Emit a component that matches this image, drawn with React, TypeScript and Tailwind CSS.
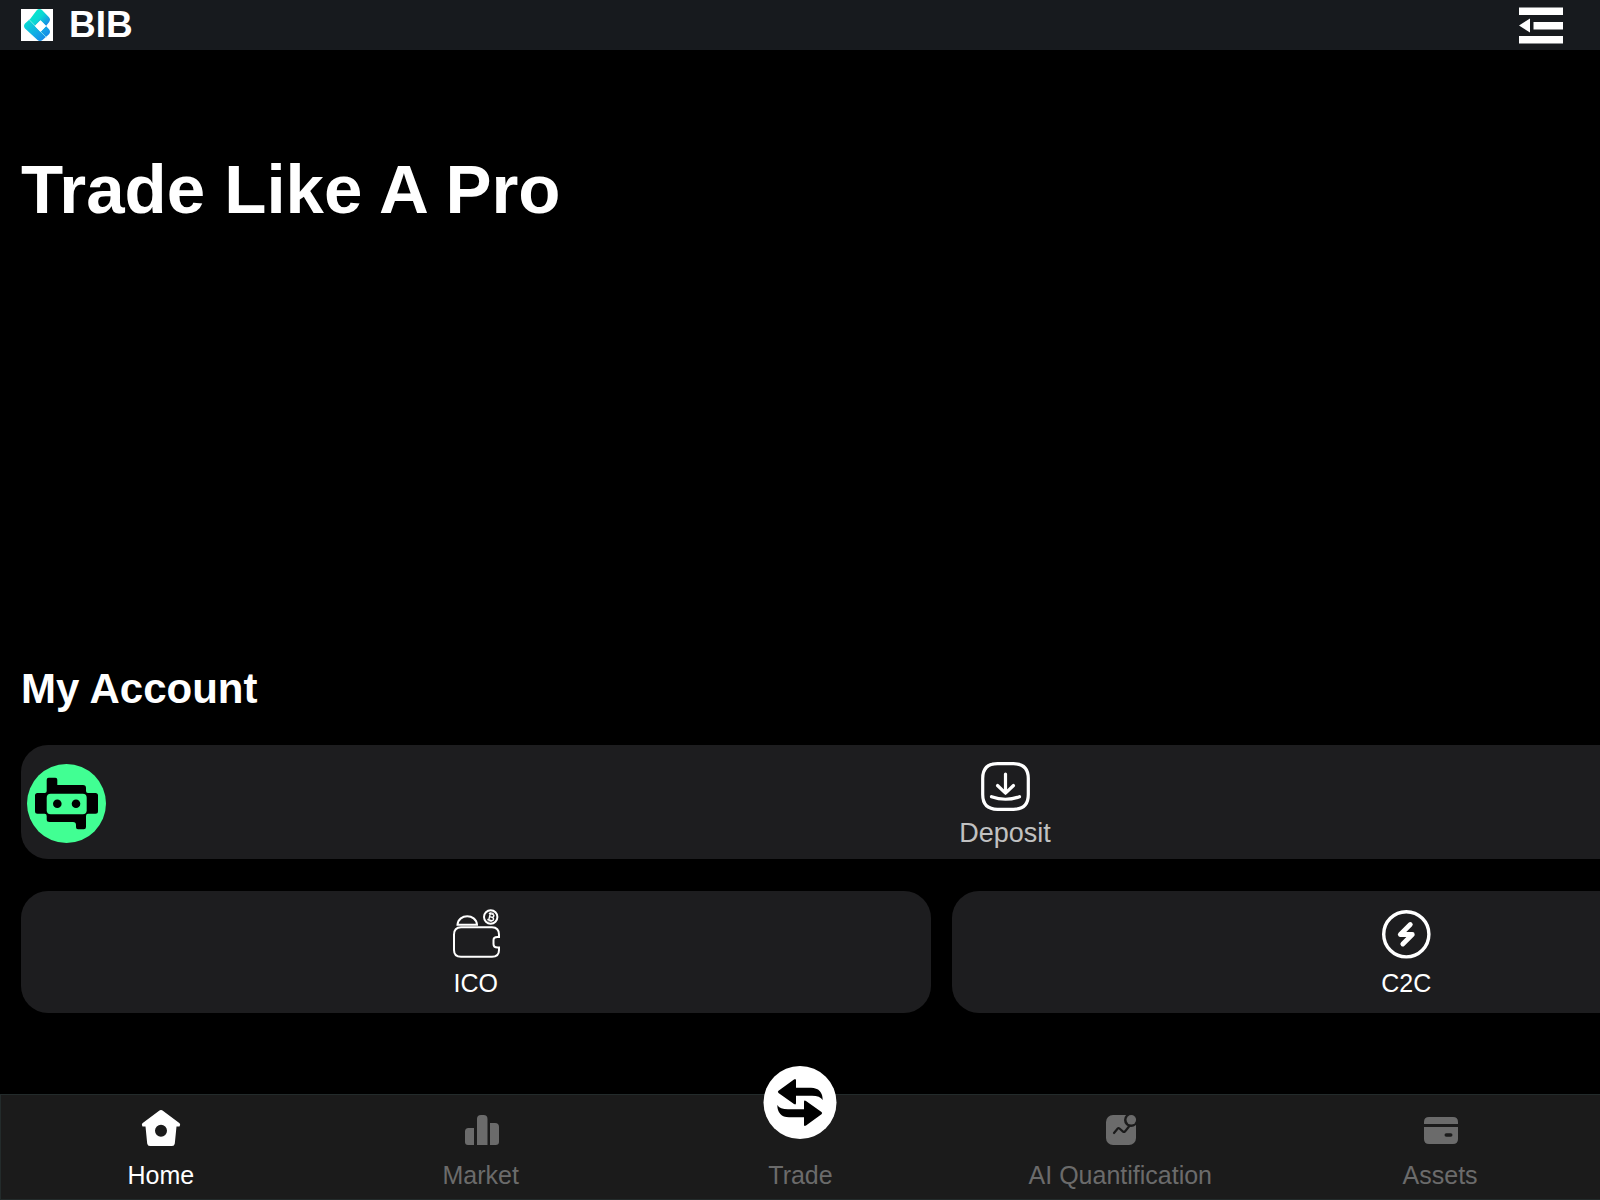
import type { ReactNode } from "react";

function Logo() {
  return (
    <svg viewBox="0 0 32 32" className="size-8 shrink-0 bg-white" aria-hidden="true">
      <defs>
        <linearGradient id="logoTop" x1="0" y1="0" x2="1" y2="0.8">
          <stop offset="0" stopColor="#00f0c8" />
          <stop offset="0.55" stopColor="#0ad8d4" />
          <stop offset="1" stopColor="#1a86e8" />
        </linearGradient>
        <linearGradient id="logoBottom" x1="0" y1="0" x2="1" y2="1">
          <stop offset="0" stopColor="#04e6cf" />
          <stop offset="0.6" stopColor="#14a5e6" />
          <stop offset="1" stopColor="#1479e8" />
        </linearGradient>
      </defs>
      <path d="M8 11.500L15.500 1.500Q18 -1 21 1L28 8.200Q30 10.500 28 13.200L25 17L19.500 11.500L14 17Z" fill="url(#logoTop)" />
      <path d="M8.500 10.500L4 14.500Q2 17 4 19.500L16.500 31Q19 33 21.500 31L28 25.200Q30 22.700 28 20.200L25 17L19.500 22.700L14 17Z" fill="url(#logoBottom)" />
      <path d="M19.500 11.300L25.200 17L19.500 22.900L13.800 17Z" fill="#fff" />
      <path d="M8 10.500L14.500 17.300M19.500 22.500L25.500 28.500" stroke="#9ff3ec" strokeWidth="0.700" />
    </svg>
  );
}

function MenuIcon() {
  return (
    <svg viewBox="0 -1.5 44 38" className="h-[38px] w-11" fill="#fff" aria-hidden="true">
      <path d="M0 0H44V7.500H0Z M14.500 14.500H44V22H14.500Z M0 28.500H44V36H0Z M0 18L11 11V25Z" />
    </svg>
  );
}

function Robot() {
  return (
    <svg viewBox="0 0 79 79" className="size-[79px] shrink-0" aria-hidden="true">
      <circle cx="39.500" cy="39.500" r="39.500" fill="#41ff93" />
      <path
        d="M21.700 13.700H28.300Q30.300 13.700 30.300 15.700V21H56Q59 21 59 24V27Q59 29 61 29H68.500Q71 29 71 31.500V47.200Q71 49.700 68.500 49.700H61Q59 49.700 59 52V63Q59 65.300 56.700 65.300H51Q49 65.300 49 63.300V61Q49 58 46 58H22.500Q19.700 58 19.700 55.500V52Q19.700 49.700 17.700 49.700H10.500Q8 49.700 8 47.200V31.500Q8 29 10.500 29H17.700Q19.700 29 19.700 27V15.700Q19.700 13.700 21.700 13.700Z"
        fill="#000"
      />
      <rect x="19.700" y="29.700" width="40" height="20.500" rx="4" fill="#41ff93" />
      <circle cx="30.300" cy="39.700" r="4.300" />
      <circle cx="49" cy="39.700" r="4.300" />
    </svg>
  );
}

function DepositIcon() {
  return (
    <svg viewBox="0 0 49 49" className="size-[49px]" fill="none" stroke="#fff" strokeWidth="3.200" strokeLinecap="round" aria-hidden="true">
      <path d="M16.500 1.700H32.500C42.500 1.700 47.300 6.500 47.300 16.500V32.500C47.300 42.500 42.500 47.300 32.500 47.300H16.500C6.500 47.300 1.700 42.500 1.700 32.500V16.500C1.700 6.500 6.500 1.700 16.500 1.700Z" />
      <path d="M24.500 12V31M16.500 23.500L24.500 31.200L32.500 23.500" strokeLinejoin="round" />
      <path d="M10.500 34.700Q24.500 39.800 38.500 34.700" />
    </svg>
  );
}

function IcoIcon() {
  return (
    <svg viewBox="-1 -1 50 50" className="size-[50px]" fill="none" stroke="#fff" strokeWidth="2" aria-hidden="true">
      <path d="M9 17.200H40Q47 17.200 47 24.700V27H45.500Q41.500 27 41.500 30V34Q41.500 37.500 45.500 37.500H47V40Q47 46.800 40 46.800H9Q2 46.800 2 40V24.700Q2 17.200 9 17.200Z" />
      <path d="M5.500 14.700C6.500 3.500 24 3.500 25 14.700Z" />
      <circle cx="38.700" cy="7" r="6.700" />
      <g transform="rotate(14 38.700 7)" strokeWidth="1.400">
        <path d="M36 3.800H39.500Q41.500 3.800 41.500 5.400T39.500 7H37.200M39.500 7Q42 7 42 8.700T39.700 10.300H36M37.500 3.800V10.300M38 2.300V3.800M40 2.300V3.800M38 10.300V11.800M40 10.300V11.800" />
      </g>
    </svg>
  );
}

function C2CIcon() {
  return (
    <svg viewBox="-1 -1 50 50" className="size-[50px]" fill="none" stroke="#fff" aria-hidden="true">
      <circle cx="24.300" cy="24.300" r="22.600" strokeWidth="3.400" />
      <path d="M28.300 14.500L18.300 24.500H30.300L20.800 34" strokeWidth="4.800" strokeLinecap="round" strokeLinejoin="round" />
    </svg>
  );
}

function HomeIcon() {
  return (
    <svg viewBox="0 0 40 40" className="size-10" fill="currentColor" aria-hidden="true">
      <path
        fillRule="evenodd"
        d="M17.800 2.900Q20 1.300 22.200 2.900L38.600 15.300Q39.800 16.500 38.500 18.500H35.500L33.800 35.500Q33.500 38 31 38H9Q6.500 38 6.200 35.500L4.500 18.500H1.500Q0.200 16.500 1.400 15.300ZM20 16.700A6 6 0 1 0 20 28.700A6 6 0 1 0 20 16.700Z"
      />
    </svg>
  );
}

function MarketIcon() {
  return (
    <svg viewBox="0 0 40 40" className="size-10" fill="currentColor" aria-hidden="true">
      <path d="M13 20V37H7Q4 37 4 34V23.500Q4 20 7.500 20ZM16 37V11Q16 7 20 7H22.500Q26.500 7 26.500 11V37ZM29 37V15H34Q38 15 38 19V34Q38 37 34.500 37Z" />
    </svg>
  );
}

function TradeIcon() {
  return (
    <svg viewBox="0 0 74 74" className="size-[74px]" aria-hidden="true">
      <circle cx="37" cy="36.500" r="36.500" fill="#fff" />
      <path id="swap" d="M15.500 24.700L31 13.400Q33 12.200 33 14.500V21.700H48Q59.500 22 59.700 34Q57 29.700 49 29.700H33V37Q33 39.300 31 38L15.500 26.900Q14.200 25.800 15.500 24.700Z" />
      <use href="#swap" transform="rotate(180 37 36.500)" />
    </svg>
  );
}

function QuantIcon() {
  return (
    <svg viewBox="0 0 40 40" className="size-10" aria-hidden="true">
      <rect x="6" y="7" width="30" height="30" rx="7" fill="currentColor" />
      <circle cx="31" cy="12" r="7" fill="#1b1b1b" />
      <circle cx="31.300" cy="11.800" r="4.800" fill="currentColor" />
      <path d="M14 25L17.700 20.500Q18.500 19.700 19.500 20.500L23 23.600Q24 24.400 25 23.400L29 18.500" fill="none" stroke="#1b1b1b" strokeWidth="2.200" strokeLinecap="round" />
    </svg>
  );
}

function AssetsIcon() {
  return (
    <svg viewBox="0 0 40 40" className="size-10" fill="currentColor" aria-hidden="true">
      <path d="M4 16V14Q4 9 9 9H33Q38 9 38 14V16ZM4 19H38V31Q38 36 33 36H9Q4 36 4 31Z" />
      <rect x="24.500" y="25.300" width="8" height="3.500" rx="1.750" fill="#1b1b1b" />
    </svg>
  );
}

function NavItem({ icon, label, active = false }: { icon: ReactNode; label: string; active?: boolean }) {
  return (
    <a
      href="#"
      aria-current={active ? "page" : undefined}
      className={`relative flex flex-1 flex-col items-center justify-end gap-[13px] pb-[10px] ${active ? "text-white" : "text-[#6b6b6b]"}`}
    >
      {icon}
      <span className="text-[25px] leading-7 whitespace-nowrap">{label}</span>
    </a>
  );
}

function Shortcut({ icon, label }: { icon: ReactNode; label: string }) {
  return (
    <button className="flex flex-col items-center gap-[10px] rounded-[27px] bg-[#1d1d1f] pt-[18px] pb-4 text-[25px] leading-7">
      {icon}
      {label}
    </button>
  );
}

export default function App() {
  return (
    <div className="flex min-h-screen flex-col overflow-x-hidden bg-black font-['Liberation_Sans',Arial,sans-serif] text-white">
      <header className="flex h-[50px] items-center justify-between bg-[#171a1e] pr-[37px] pl-[21px]">
        <div className="flex items-center gap-4">
          <Logo />
          <span className="text-[37px] leading-[48px] font-bold">BIB</span>
        </div>
        <button aria-label="Menu">
          <MenuIcon />
        </button>
      </header>

      <main className="flex-1 pb-[106px] pl-[21px]">
        <section className="h-[615px] pt-[100px]">
          <h1 className="text-[69px] leading-[80px] font-bold">Trade Like A Pro</h1>
        </section>

        <section>
          <h2 className="text-[42px] leading-[48px] font-bold">My Account</h2>
          <div className="mt-8 flex w-[115vw] items-start gap-[43px] rounded-[27px] bg-[#1d1d1f] pl-[6px]">
            <div className="pt-[19px]">
              <Robot />
            </div>
            <button className="flex flex-1 flex-col items-center gap-[6px] pt-[17px] pb-[10px] text-[27px] leading-8 text-[#c1c1c1]">
              <DepositIcon />
              Deposit
            </button>
          </div>
          <div className="mt-8 grid w-[115vw] grid-cols-2 gap-[21px]">
            <Shortcut icon={<IcoIcon />} label="ICO" />
            <Shortcut icon={<C2CIcon />} label="C2C" />
          </div>
        </section>
      </main>

      <nav className="fixed inset-x-0 bottom-0 flex h-[106px] border-y border-l border-[#232b2b] bg-[#1b1b1b]">
        <NavItem icon={<HomeIcon />} label="Home" active />
        <NavItem icon={<MarketIcon />} label="Market" />
        <NavItem icon={<span className="absolute -top-[29px]"><TradeIcon /></span>} label="Trade" />
        <NavItem icon={<QuantIcon />} label="AI Quantification" />
        <NavItem icon={<AssetsIcon />} label="Assets" />
      </nav>
    </div>
  );
}
